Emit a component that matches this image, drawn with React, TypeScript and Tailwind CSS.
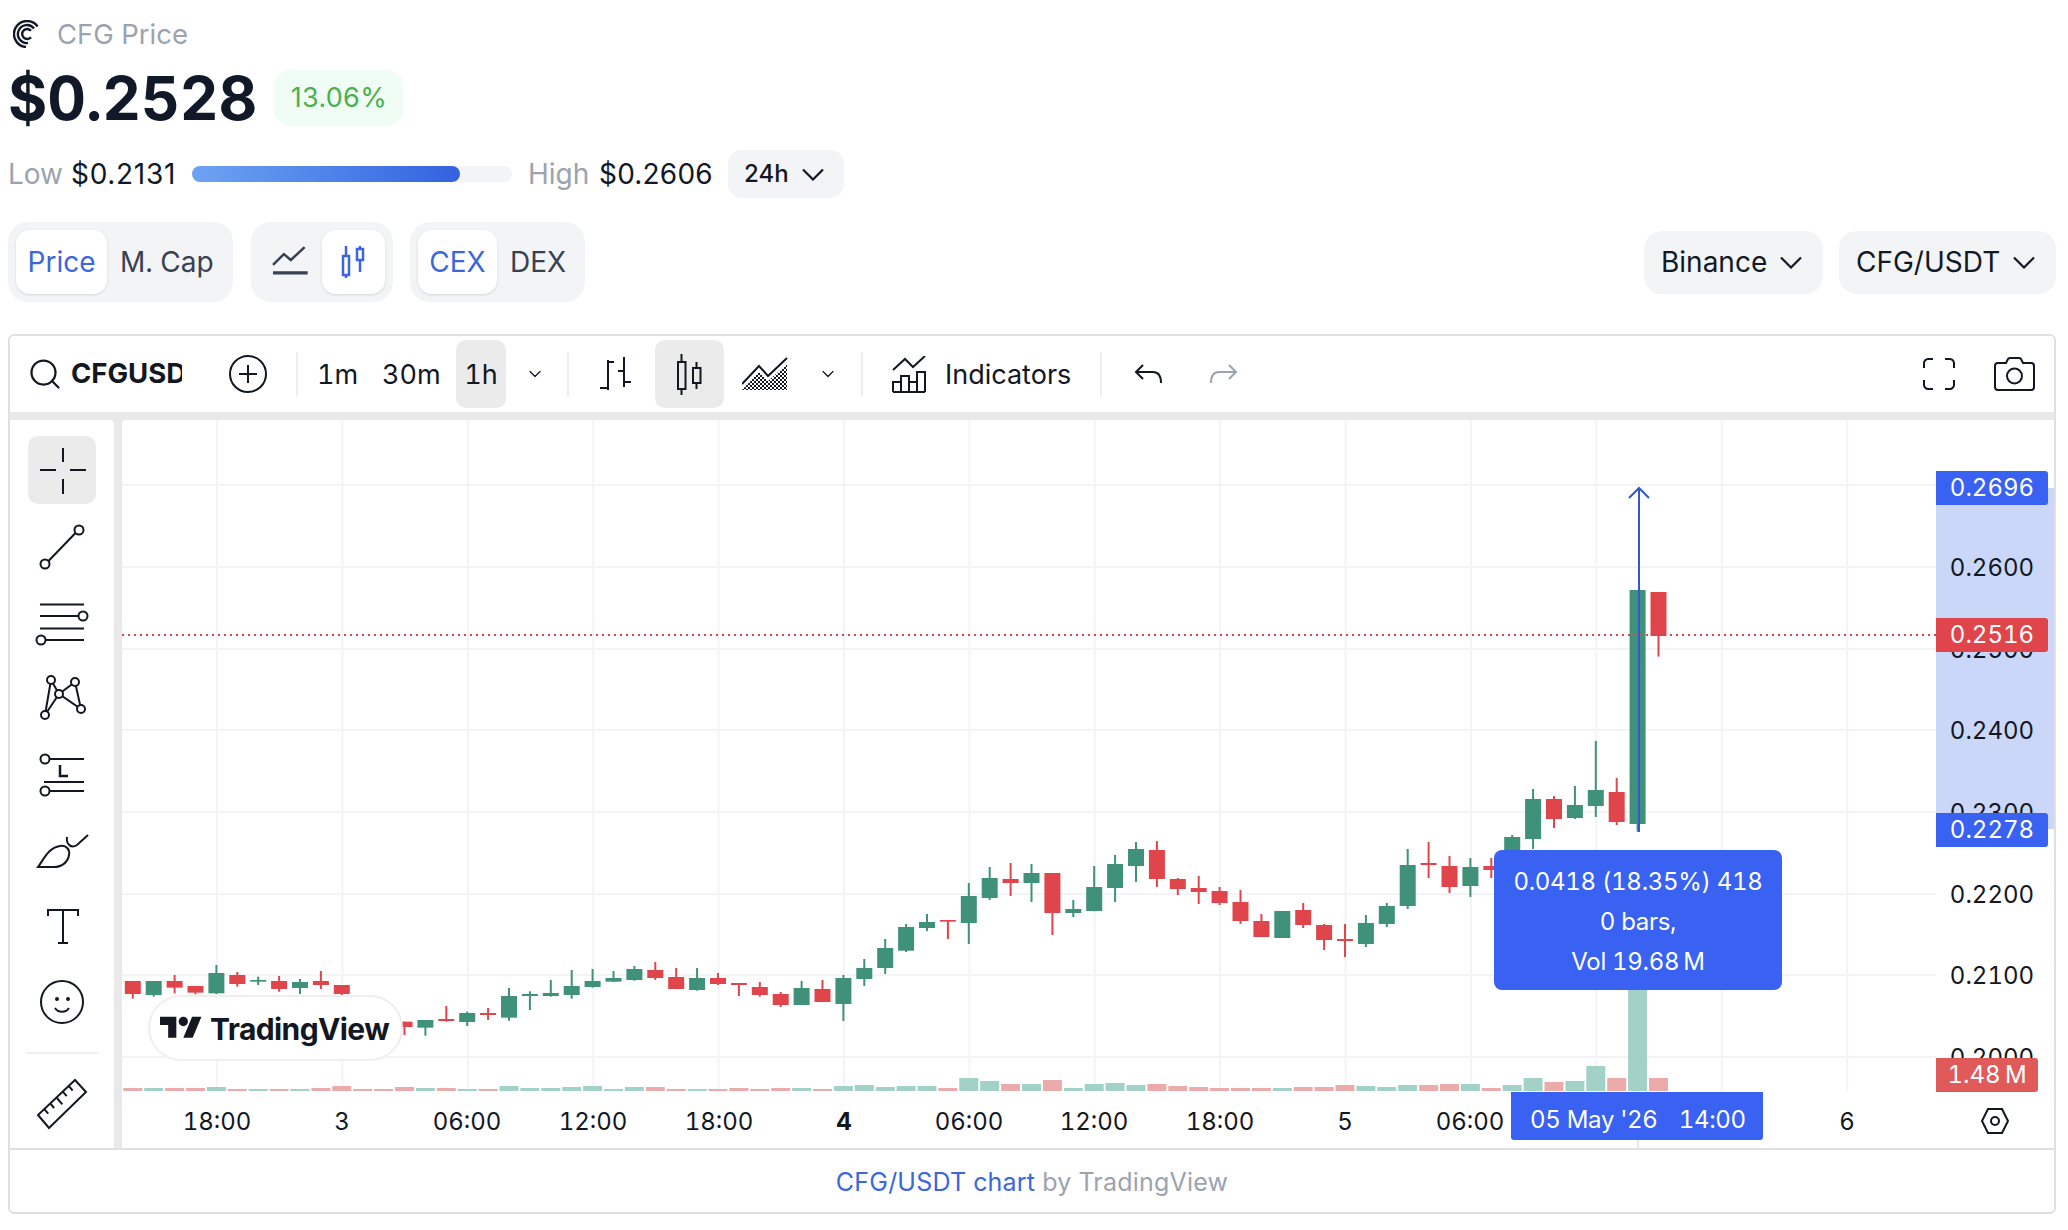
import { ChevronDown, Search } from "lucide-react"

type Candle = [number, number, number, number, "g" | "r"]

const GREEN = "#3f9179"
const RED = "#e0454b"

// wick top, body top, body bottom, wick bottom (measured off the crops, 3 units per px)
const leftCandles: Candle[] = [
  [303, 303, 342, 356, "r"], [303, 303, 345, 350, "g"], [285, 303, 323, 340, "r"], [318, 318, 338, 343, "r"],
  [255, 279, 340, 342, "g"], [276, 285, 312, 320, "r"], [290, 300, 305, 315, "g"], [288, 303, 327, 335, "r"],
  [297, 306, 324, 342, "g"], [273, 303, 315, 327, "r"], [315, 315, 342, 350, "r"], [380, 390, 410, 420, "r"],
  [390, 400, 420, 430, "r"], [425, 425, 441, 465, "r"], [420, 420, 443, 467, "g"], [378, 417, 423, 425, "r"],
  [395, 399, 426, 438, "g"], [384, 399, 405, 420, "r"], [324, 348, 413, 422, "g"], [334, 342, 348, 390, "g"],
  [300, 339, 348, 350, "g"], [270, 318, 345, 356, "g"], [267, 303, 321, 323, "g"], [273, 294, 305, 306, "g"],
  [258, 267, 300, 302, "g"], [246, 270, 294, 300, "r"], [264, 291, 327, 327, "r"], [264, 294, 330, 332, "g"],
  [279, 294, 312, 315, "r"], [310, 309, 315, 348, "r"], [306, 321, 345, 350, "r"], [336, 342, 375, 381, "r"],
  [303, 324, 375, 375, "g"], [300, 327, 366, 366, "r"], [285, 294, 372, 423, "g"], [237, 264, 297, 318, "g"],
  [177, 204, 264, 282, "g"],
]

const rightCandles: Candle[] = [
  [432, 441, 512, 516, "g"], [402, 426, 444, 453, "g"], [420, 420, 425, 477, "r"], [309, 348, 429, 492, "g"],
  [261, 294, 354, 360, "g"], [249, 297, 309, 348, "r"], [252, 279, 309, 366, "g"], [279, 279, 399, 465, "r"],
  [360, 387, 399, 411, "g"], [258, 321, 393, 394, "g"], [225, 252, 324, 366, "g"], [186, 207, 258, 306, "g"],
  [183, 210, 297, 321, "r"], [294, 297, 327, 345, "r"], [288, 324, 336, 372, "r"], [321, 333, 369, 375, "r"],
  [330, 366, 423, 432, "r"], [402, 423, 471, 471, "r"], [393, 393, 474, 474, "g"], [369, 390, 435, 444, "r"],
  [432, 435, 480, 510, "r"], [432, 477, 483, 531, "r"], [405, 429, 492, 501, "g"], [369, 378, 432, 441, "g"],
  [207, 255, 378, 387, "g"], [186, 249, 255, 294, "r"], [228, 258, 321, 339, "r"], [234, 261, 318, 351, "g"],
  [234, 258, 270, 294, "r"], [165, 171, 240, 250, "g"], [27, 57, 177, 207, "g"], [48, 57, 117, 144, "r"],
  [18, 75, 114, 117, "g"], [-117, 30, 78, 111, "g"], [-6, 36, 126, 135, "r"], [-570, -570, 132, 155, "g"],
  [-564, -564, -432, -370, "r"],
]

const candles = [
  ...leftCandles.map(([a, b, c, d, col]) => ({ wt: a / 3 + 880, bt: b / 3 + 880, bb: c / 3 + 880, wb: d / 3 + 880, col })),
  ...rightCandles.map(([a, b, c, d, col]) => ({ wt: a / 3 + 780, bt: b / 3 + 780, bb: c / 3 + 780, wb: d / 3 + 780, col })),
]

const volumes: [number, "g" | "r"][] = [
  [3, "r"], [3, "g"], [3, "r"], [3, "r"], [4, "g"], [2, "r"], [2, "g"], [2, "r"], [2, "g"], [3, "r"],
  [5, "r"], [2, "r"], [2, "r"], [4, "r"], [3, "g"], [3, "r"], [2, "g"], [2, "r"], [5, "g"], [3, "g"],
  [3, "g"], [4, "g"], [5, "g"], [2, "g"], [4, "g"], [4, "r"], [2, "r"], [2, "g"], [2, "r"], [3, "r"],
  [2, "r"], [3, "r"], [3, "g"], [2, "r"], [5, "g"], [6, "g"], [4, "g"], [5, "g"], [5, "g"], [3, "r"],
  [13, "g"], [10, "g"], [7, "r"], [7, "g"], [11, "r"], [3, "g"], [7, "g"], [8, "g"], [6, "g"], [7, "r"],
  [5, "r"], [4, "r"], [3, "r"], [3, "r"], [3, "r"], [3, "g"], [4, "r"], [4, "r"], [6, "r"], [5, "g"],
  [4, "g"], [6, "g"], [6, "r"], [7, "r"], [7, "g"], [3, "r"], [6, "g"], [13, "g"], [9, "r"], [10, "g"],
  [25, "g"], [13, "r"], [111, "g"], [13, "r"],
]

const candleX = (i: number) => 132.8 + 20.9 * i
const hGrid = [485, 567, 649, 730, 812, 894, 975, 1057]
const vGrid = Array.from({ length: 14 }, (_, i) => 217 + 125.4 * i)

const timeLabels = [
  { x: 217, t: "18:00" }, { x: 342, t: "3" }, { x: 467, t: "06:00" }, { x: 593, t: "12:00" },
  { x: 719, t: "18:00" }, { x: 844, t: "4", bold: true }, { x: 969, t: "06:00" }, { x: 1094, t: "12:00" },
  { x: 1220, t: "18:00" }, { x: 1345, t: "5" }, { x: 1470, t: "06:00" }, { x: 1847, t: "6" },
]

const priceLabels = [
  { y: 567, t: "0.2600" }, { y: 649, t: "0.2500" }, { y: 730, t: "0.2400" }, { y: 812, t: "0.2300" },
  { y: 894, t: "0.2200" }, { y: 975, t: "0.2100" }, { y: 1057, t: "0.2000" },
]

function Chart() {
  return (
    <svg viewBox="122 420 1932 728" className="absolute inset-0 w-full h-full">
      <defs>
        <clipPath id="pane"><rect x="122" y="420" width="1814" height="672" /></clipPath>
      </defs>
      {hGrid.map((y) => <line key={y} x1="122" x2="1936" y1={y} y2={y} stroke="#f3f4f5" strokeWidth="2" />)}
      {vGrid.map((x) => <line key={x} x1={x} x2={x} y1="420" y2="1092" stroke="#f3f4f5" strokeWidth="2" />)}
      <g clipPath="url(#pane)">
        {volumes.map(([h, c], i) => (
          <rect key={i} x={candleX(i) - 9.5} y={1091 - h} width="19" height={h} fill={c === "g" ? "#a2d1c8" : "#ebabab"} />
        ))}
        {candles.map((c, i) => (
          <g key={i} fill={c.col === "g" ? GREEN : RED}>
            <rect x={candleX(i) - 1} y={c.wt} width="2" height={c.wb - c.wt} />
            <rect x={candleX(i) - 8} y={c.bt} width="16" height={c.bb - c.bt} />
          </g>
        ))}
      </g>
      <line x1="122" x2="1936" y1="635" y2="635" stroke={RED} strokeWidth="2" strokeDasharray="2 4" />
      <path d="M1639 832V488M1629 498l10-10l10 10" fill="none" stroke="#3358c9" strokeWidth="2" />
      <line x1="1638" x2="1638" y1="1140" y2="1148" stroke="#e5e7eb" strokeWidth="2" />
    </svg>
  )
}

function CenterLogo() {
  return (
    <svg viewBox="0 0 28 28" className="w-[28px] h-[28px]" fill="none" stroke="#111827" strokeWidth="2.400">
      <path d="M24.600 6.500A13 13 0 1 0 13 27" />
      <path d="M21 8.500A9 9 0 1 0 15 23" />
      <path d="M18 10.800A5 5 0 1 0 18 17.200" />
    </svg>
  )
}

function Chevron() {
  return (
    <svg viewBox="0 0 22 13" className="w-[22px] h-[13px] shrink-0" fill="none" stroke="#111827" strokeWidth="2.200">
      <path d="M1 1.500L11 11.500L21 1.500" />
    </svg>
  )
}

function BarsIcon() {
  return (
    <svg viewBox="0 0 31 34" className="w-[31px] h-[34px]" fill="none" stroke="#131722" strokeWidth="2">
      <path d="M8 3V33M0 31H8M8 5H14M24 0V30M18 14H24M24 25H31" />
    </svg>
  )
}

function CandlesIcon() {
  return (
    <svg viewBox="0 0 25 41" className="w-[25px] h-[41px]" fill="none" stroke="#131722" strokeWidth="2">
      <path d="M4.500 0V8M4.500 35V41M19.500 8V14M19.500 29V35" />
      <rect x="1" y="8" width="7.500" height="27" />
      <rect x="16" y="14" width="7.500" height="15" />
    </svg>
  )
}

function AreaIcon() {
  return (
    <svg viewBox="0 0 48 35" className="w-[48px] h-[35px]">
      <defs>
        <pattern id="hatch" width="4" height="4" patternUnits="userSpaceOnUse">
          <rect width="2" height="2" fill="#131722" />
          <rect x="2" y="2" width="2" height="2" fill="#131722" />
        </pattern>
      </defs>
      <path d="M0 33L17 15L26 24L45 7V33Z" fill="url(#hatch)" />
      <path d="M0 27L17 9L26 19L45 1" fill="none" stroke="#131722" strokeWidth="2" />
    </svg>
  )
}

function IndicatorsIcon() {
  return (
    <svg viewBox="0 0 34 37" className="w-[34px] h-[37px]" fill="none" stroke="#131722" strokeWidth="2">
      <path d="M1 14L13 3L21 11L33 0" />
      <path d="M1 36V26H9V36M9 36V20H17V36M17 36V26H25V36M25 36V16H33V36M1 36H33" />
    </svg>
  )
}

function UndoIcon({ stroke }: { stroke: string }) {
  return (
    <svg viewBox="0 0 28 22" className="w-[28px] h-[22px]" fill="none" stroke={stroke} strokeWidth="2">
      <path d="M9 2L2 9L9 16M2 9H19C24 9 27 13 27 20" />
    </svg>
  )
}

function FullscreenIcon() {
  return (
    <svg viewBox="0 0 32 32" className="w-[32px] h-[32px]" fill="none" stroke="#131722" strokeWidth="2">
      <path d="M1 10V5C1 3 3 1 5 1H10M22 1H27C29 1 31 3 31 5V10M31 22V27C31 29 29 31 27 31H22M10 31H5C3 31 1 29 1 27V22" />
    </svg>
  )
}

function CameraIcon() {
  return (
    <svg viewBox="0 0 41 34" className="w-[41px] h-[34px]" fill="none" stroke="#131722" strokeWidth="2">
      <path d="M1 9C1 7 2 6 4 6H12L14 2C14.500 1 15.500 1 16 1H25C26 1 26.500 1 27 2L29 6H37C39 6 40 7 40 9V30C40 32 39 33 37 33H4C2 33 1 32 1 30Z" />
      <circle cx="20.500" cy="19" r="7.500" />
    </svg>
  )
}

function ToolIcon({ children }: { children: React.ReactNode }) {
  return (
    <svg viewBox="0 0 56 56" className="w-[56px] h-[56px]" fill="none" stroke="#131722" strokeWidth="2">
      {children}
    </svg>
  )
}

const rulerTicks = [0.17, 0.33, 0.5, 0.67, 0.83].map((t, i) => {
  const x = 4 + 37 * t
  const y = 38 - 35 * t
  const len = i === 2 ? 9 : 6
  return `M${x} ${y}l${len * 0.65} ${len * 0.76}`
})

const tools = [
  <path key="cross" d="M6 28H22M36 28H52M29 6V20M29 37V52" />,
  <g key="trend"><path d="M14.500 43L41.500 15" /><circle cx="45" cy="12" r="4.500" /><circle cx="11" cy="46" r="4.500" /></g>,
  <g key="hline">
    <path d="M6 10.500H50M6 22H44M6 34.500H50M12 46H50" />
    <circle cx="49" cy="22" r="4.500" /><circle cx="7" cy="46" r="4.500" />
  </g>,
  <g key="xabcd">
    <path d="M11 45L17 10L25 24L41 12L47 39L25 24L11 45" />
    <circle cx="17" cy="10" r="4" fill="#fff" /><circle cx="41" cy="12" r="4" fill="#fff" /><circle cx="25" cy="24" r="4" fill="#fff" />
    <circle cx="47" cy="39" r="4" fill="#fff" /><circle cx="11" cy="45" r="4" fill="#fff" />
  </g>,
  <g key="fib" transform="translate(0 3)">
    <path d="M16 10H50M10 33H50M16 42H50" /><path d="M26 16V27H34" strokeWidth="2.500" />
    <circle cx="11" cy="10" r="4.500" /><circle cx="11" cy="42" r="4.500" />
  </g>,
  <g key="brush" transform="translate(0 2)">
    <path d="M4 43C10 35 14 24 26 22C33 21 36 26 35 31C34 38 28 43 20 43Z" />
    <path d="M33 13C32 20 37 25 43 21L54 11" />
  </g>,
  <path key="text" d="M14 18V12H44V18M29 12V45M24 45H34" />,
  <g key="smile">
    <circle cx="28" cy="28" r="21" />
    <path d="M21 34C24 39 32 39 35 34" />
    <circle cx="23" cy="25" r="1" fill="#131722" /><circle cx="34" cy="25" r="1" fill="#131722" />
  </g>,
]

function Segment({ children, active, className }: { children: React.ReactNode; active?: boolean; className: string }) {
  return (
    <div
      className={`flex items-center justify-center h-[64px] rounded-[14px] ${active ? "bg-white shadow-[0_1px_3px_rgba(0,0,0,0.12)] text-[#3b66de]" : "text-[#374151]"} ${className}`}
    >
      {children}
    </div>
  )
}

function Pill({ label, className }: { label: string; className: string }) {
  return (
    <div className={`flex items-center justify-between h-[63px] pl-[17px] pr-[21px] rounded-[18px] bg-[#f3f4f6] text-[28px] text-[#111827] ${className}`}>
      <span>{label}</span>
      <Chevron />
    </div>
  )
}

const Sep = ({ className }: { className: string }) => <div className={`w-[2px] h-[44px] bg-[#eeeeee] shrink-0 ${className}`} />

export default function App() {
  return (
    <div className="w-[2068px] h-[1230px] bg-white font-['Inter',sans-serif] tabular-nums text-[#131722] overflow-hidden pl-[8px] pr-[12px] pt-[19px]">
      {/* Header */}
      <div className="flex items-center h-[30px] pl-[5px] gap-[16px]">
        <CenterLogo />
        <span className="mt-[2px] text-[27.5px] text-[#9ca3af]">CFG Price</span>
      </div>
      <div className="flex items-center h-[56px] mt-[21px]">
        <span className="text-[60px] font-bold text-[#111827] leading-none">$0.2528</span>
        <div className="flex items-center justify-center w-[129px] h-[56px] ml-[17px] rounded-[16px] bg-[#f0fdf4] text-[27px] normal-nums tracking-[0.3px] text-[#4caf50]">13.06%</div>
      </div>
      <div className="flex items-center h-[48px] mt-[24px] text-[28px] whitespace-nowrap normal-nums">
        <span className="w-[54px] text-[#9ca3af]">Low</span>
        <span className="w-[104px] ml-[9px] tracking-[0.7px] text-[#111827]">$0.2131</span>
        <div className="w-[320px] h-[16px] ml-[17px] rounded-full bg-[#f3f4f6]">
          <div className="w-[268px] h-full rounded-full bg-gradient-to-r from-[#6ea3f2] to-[#3461e0]" />
        </div>
        <span className="w-[60px] ml-[16px] text-[#9ca3af]">High</span>
        <span className="w-[112px] ml-[11px] tracking-[0.2px] text-[#111827]">$0.2606</span>
        <div className="flex items-center justify-between w-[116px] h-[48px] ml-[17px] pl-[16px] pr-[20px] rounded-[14px] bg-[#f3f4f6] text-[24px] font-medium">
          <span>24h</span>
          <Chevron />
        </div>
      </div>
      <div className="flex items-center h-[80px] mt-[24px] text-[28px]">
        <div className="flex items-center w-[225px] h-[80px] px-[8px] rounded-[20px] bg-[#f3f4f6]">
          <Segment active className="w-[91px]">Price</Segment>
          <span className="ml-[13px] text-[#374151]">M. Cap</span>
        </div>
        <div className="flex items-center w-[142px] h-[80px] ml-[18px] px-[8px] rounded-[20px] bg-[#f3f4f6]">
          <svg viewBox="0 0 36 32" className="w-[36px] h-[32px] ml-[13px]" fill="none" stroke="#374151" strokeWidth="2.500">
            <path d="M1 19L12 8L19 14L33 1" />
            <path d="M1 27H36" strokeWidth="3.500" />
          </svg>
          <Segment active className="w-[64px] ml-[14px]">
            <svg viewBox="0 0 26 35" className="w-[26px] h-[35px]" fill="#fff" stroke="#3b66de" strokeWidth="2.500">
              <path d="M6 1V33M20 1V27" />
              <rect x="3" y="11" width="6" height="19" />
              <rect x="17" y="4" width="6" height="11" />
            </svg>
          </Segment>
        </div>
        <div className="flex items-center w-[175px] h-[80px] ml-[17px] px-[8px] rounded-[20px] bg-[#f3f4f6]">
          <Segment active className="w-[79px]">CEX</Segment>
          <span className="ml-[13px] text-[#374151]">DEX</span>
        </div>
        <div className="flex-1" />
        <Pill label="Binance" className="w-[179px]" />
        <Pill label="CFG/USDT" className="w-[217px] ml-[16px]" />
      </div>

      {/* Chart card */}
      <div className="mt-[32px] w-full h-[880px] border-2 border-[#e0e0e0] rounded-[6px] flex flex-col overflow-hidden">
        <div className="flex items-center h-[76px] shrink-0 text-[27px]">
          <Search className="w-[36px] h-[36px] ml-[17px]" strokeWidth={1.5} />
          <div className="w-[111px] ml-[8px] overflow-hidden text-[27.5px] font-bold whitespace-nowrap">CFGUSD</div>
          <svg viewBox="0 0 38 38" className="w-[38px] h-[38px] ml-[47px]" fill="none" stroke="#131722" strokeWidth="2">
            <circle cx="19" cy="19" r="18" />
            <path d="M19 10V28M10 19H28" />
          </svg>
          <Sep className="ml-[29px]" />
          <span className="mt-[2px] ml-[19px] w-[37px] text-center">1m</span>
          <span className="mt-[2px] ml-[28px] w-[57px] text-center">30m</span>
          <div className="flex items-center justify-center ml-[17px] pt-[2px] w-[50px] h-[68px] rounded-[10px] bg-[#ebebeb]">1h</div>
          <ChevronDown className="w-[20px] h-[20px] ml-[19px]" strokeWidth={1.5} />
          <Sep className="ml-[22px]" />
          <div className="ml-[31px]"><BarsIcon /></div>
          <div className="flex items-center justify-center ml-[24px] w-[69px] h-[68px] rounded-[10px] bg-[#ebebeb]"><CandlesIcon /></div>
          <div className="ml-[18px]"><AreaIcon /></div>
          <ChevronDown className="w-[20px] h-[20px] ml-[28px]" strokeWidth={1.5} />
          <Sep className="ml-[23px]" />
          <div className="ml-[29px]"><IndicatorsIcon /></div>
          <span className="mt-[2px] ml-[19px] w-[126px] whitespace-nowrap">Indicators</span>
          <Sep className="ml-[29px]" />
          <div className="ml-[32px]"><UndoIcon stroke="#131722" /></div>
          <div className="ml-[48px] -scale-x-100"><UndoIcon stroke="#9ca3af" /></div>
          <div className="ml-auto"><FullscreenIcon /></div>
          <div className="ml-[39px] mr-[19px]"><CameraIcon /></div>
        </div>

        <div className="flex flex-1 bg-[#e9e9e9] pt-[8px]">
          {/* Left tools */}
          <div className="flex flex-col items-center w-[104px] mr-[8px] pt-[16px] bg-white rounded-tr-[4px] shrink-0">
            <div className="flex flex-col gap-[8px]">
              {tools.map((t, i) => (
                <div key={i} className={`flex items-center justify-center w-[68px] h-[68px] rounded-[10px] ${i === 0 ? "bg-[#ebebeb]" : ""}`}>
                  <ToolIcon>{t}</ToolIcon>
                </div>
              ))}
            </div>
            <div className="w-[72px] h-[2px] mt-[16px] bg-[#eeeeee]" />
            <div className="flex items-center justify-center w-[68px] h-[68px] mt-[17px]">
              <ToolIcon>
                <path d="M41 3L52 15L15 51L4 38Z" />
                <path d={rulerTicks.join("")} />
              </ToolIcon>
            </div>
          </div>

          {/* Chart pane */}
          <div className="relative flex-1 bg-white rounded-tl-[4px] overflow-hidden">
            <div className="absolute left-[1814px] top-[68px] w-[118px] h-[341px] bg-[#cbd7f9]" />
            <Chart />

            {priceLabels.map((p) => (
              <span
                key={p.t}
                className="absolute left-[1814px] w-[112px] text-center text-[24px] leading-none -translate-y-1/2"
                style={{ top: p.y - 419 }}
              >
                {p.t}
              </span>
            ))}
            <div className="absolute left-[1814px] top-[51px] flex items-center justify-center w-[112px] h-[34px] rounded-r-[3px] bg-[#3961f2] text-white text-[24px]">0.2696</div>
            <div className="absolute left-[1814px] top-[198px] flex items-center justify-center w-[112px] h-[34px] rounded-r-[3px] bg-[#e0454b] text-white text-[24px]">0.2516</div>
            <div className="absolute left-[1814px] top-[393px] flex items-center justify-center w-[112px] h-[34px] rounded-r-[3px] bg-[#3961f2] text-white text-[24px]">0.2278</div>
            <div className="absolute left-[1814px] top-[638px] flex items-center justify-center w-[102px] h-[34px] rounded-r-[3px] bg-[#e05a5a] text-white text-[24px]">{"1.48\u2009M"}</div>

            {timeLabels.map((l) => (
              <span
                key={`${l.x}`}
                className={`absolute top-[686px] w-[80px] -ml-[40px] text-center text-[24px] leading-[32px] ${l.bold ? "font-bold" : ""}`}
                style={{ left: l.x - 122 }}
              >
                {l.t}
              </span>
            ))}
            <svg viewBox="0 0 28 26" className="absolute left-[1859px] top-[688px] w-[28px] h-[26px]" fill="none" stroke="#131722" strokeWidth="2">
              <path d="M7 1H21L27 13L21 25H7L1 13Z" />
              <circle cx="14" cy="13" r="4" />
            </svg>

            {/* TradingView badge */}
            <div className="absolute left-[26px] top-[575px] flex items-center w-[255px] h-[66px] pl-[10px] gap-[8px] rounded-full border-2 border-[#eeeeee] bg-white">
              <svg viewBox="0 0 36 28" className="w-[42px] h-[33px]" fill="#131722">
                <path d="M14 22H7V11H0V4h14v18zM28 22h-8l7.500-18h8L28 22z" />
                <circle cx="20" cy="8" r="4" />
              </svg>
              <span className="mt-[2px] text-[30px] font-bold tracking-[-0.6px] whitespace-nowrap">TradingView</span>
            </div>

            {/* Measure tooltip */}
            <div className="absolute left-[1372px] top-[430px] flex flex-col items-center justify-center w-[288px] h-[140px] pt-[3px] rounded-[8px] bg-[#3961f2] text-white text-[24px] tracking-[-0.3px] leading-[40px]">
              <span>0.0418 (18.35%) 418</span>
              <span>0 bars,</span>
              <span>{"Vol 19.68\u2009M"}</span>
            </div>
            <div className="absolute left-[1389px] top-[672px] flex items-center w-[252px] h-[48px] pl-[19px] pt-[7px] rounded-b-[3px] bg-[#3961f2] text-white text-[24px] tracking-[-0.3px] whitespace-nowrap">
              <span>05 May '26</span>
              <span className="ml-[21px]">14:00</span>
            </div>
          </div>
        </div>

        {/* Footer */}
        <div className="flex items-center justify-center h-[64px] pt-[4px] shrink-0 border-t-2 border-[#e0e0e0] text-[25px] tracking-[0.2px]">
          <span className="text-[#3b66de]">CFG/USDT chart</span>
          <span className="ml-[7px] text-[#9ca3af]">by TradingView</span>
        </div>
      </div>
    </div>
  )
}
